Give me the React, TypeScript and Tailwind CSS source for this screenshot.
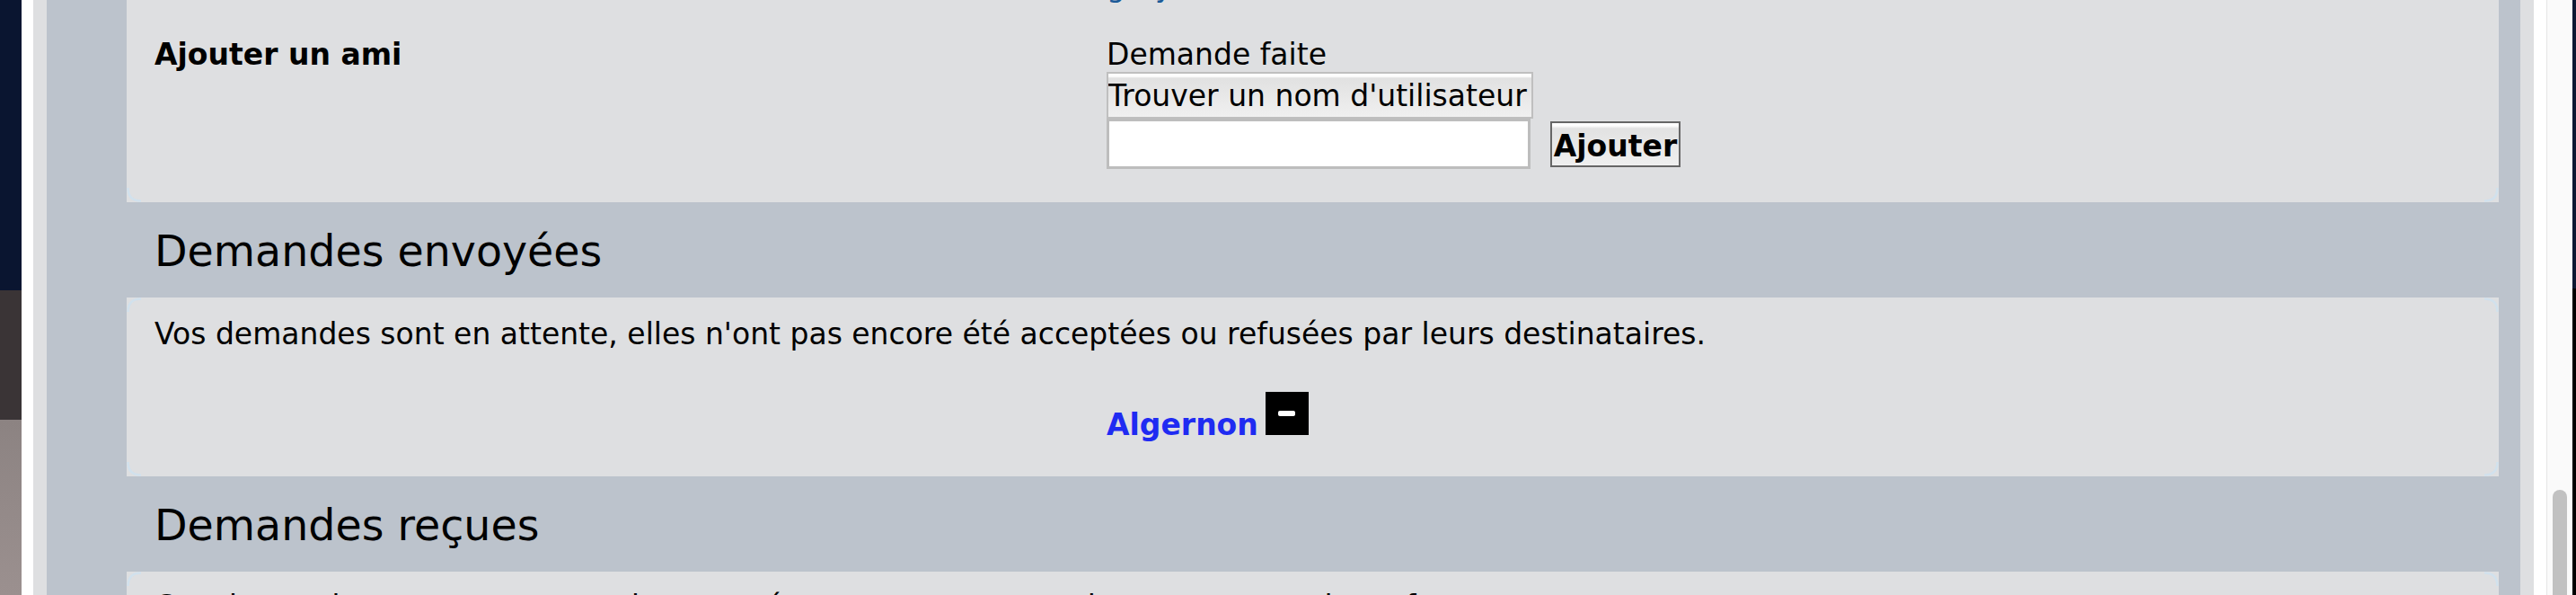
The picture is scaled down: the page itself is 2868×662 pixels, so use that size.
import React from 'react';

type CornerPos = 'tl' | 'tr' | 'bl' | 'br';

function Corner({ pos }: { pos: CornerPos }) {
  const place = {
    tl: 'top-0 left-0',
    tr: 'top-0 right-0 -scale-x-100',
    bl: 'bottom-0 left-0 -scale-y-100',
    br: 'bottom-0 right-0 -scale-x-100 -scale-y-100',
  }[pos];
  return (
    <svg className={`absolute w-[16px] h-[16px] ${place}`} viewBox="0 0 16 16">
      <path d="M1.5 16 Q1.5 1.5 16 1.5" fill="none" stroke="#cfe1ee" strokeWidth="2.5" opacity="0.9" />
    </svg>
  );
}

function Card({ className, children }: { className?: string; children: React.ReactNode }) {
  return (
    <div className={`relative bg-[#dedfe1] pl-[31px] ${className ?? ''}`}>
      <Corner pos="tl" />
      <Corner pos="tr" />
      <Corner pos="bl" />
      <Corner pos="br" />
      {children}
    </div>
  );
}

function Heading({ children }: { children: React.ReactNode }) {
  return (
    <h2 className="pl-[31px] pt-[27px] pb-[24px] text-[47.5px] leading-[normal] font-normal text-black">
      {children}
    </h2>
  );
}

export default function App() {
  return (
    <div className="flex h-[662px] w-[2868px] overflow-hidden font-['DejaVu_Sans',Verdana,sans-serif] text-[33px] leading-[normal] text-black">
      {/* desktop peeking out on the left */}
      <div className="flex w-[24px] shrink-0 flex-col">
        <div className="h-[323px] bg-[#0a1530]" />
        <div className="h-[144px] bg-[#3a3436]" />
        <div className="flex-1 bg-gradient-to-b from-[#8c8382] to-[#9b908f]" />
      </div>

      {/* page */}
      <div className="w-[2811px] shrink-0 bg-white pl-[13px] pr-[14px]">
        <div className="h-full bg-[#dedfe1] px-[15px]">
          <div className="flex h-full flex-col bg-[#bcc3cc] pl-[89px] pr-[24px]">
            <Card className="-mt-[57px] pt-[22px] pb-[37px]">
              <div className="grid grid-cols-[1060px_1fr]">
                <div />
                <div>
                  <a className="text-[#1b5a98]">grey</a>
                </div>
              </div>
              <div className="mt-[37px] grid grid-cols-[1060px_1fr]">
                <div className="font-bold">Ajouter un ami</div>
                <div>
                  <div>Demande faite</div>
                  <div className="flex h-[52px] w-[475px] items-center overflow-hidden whitespace-nowrap border-2 border-[#bfbfbf] bg-[linear-gradient(#fdfdfd_0,#fdfdfd_3px,#e1e1e1_5px,#f0f0f0_100%)] leading-none">
                    Trouver un nom d'utilisateur
                  </div>
                  <div className="flex items-end gap-[22px]">
                    <div className="h-[56px] w-[472px] border-[3px] border-[#bdbdbd] bg-white" />
                    <button className="mb-[2px] flex h-[51px] w-[145px] items-center justify-center whitespace-nowrap border-2 border-[#666666] bg-[linear-gradient(#fdfdfd_0,#fdfdfd_3px,#e2e2e2_6px,#efefef_100%)] pt-[4px] font-bold leading-none text-black">
                      Ajouter
                    </button>
                  </div>
                </div>
              </div>
            </Card>

            <Heading>Demandes envoyées</Heading>

            <Card className="pt-[21px] pb-[38px]">
              <p>
                Vos demandes sont en attente, elles n'ont pas encore été acceptées ou refusées par leurs destinataires.
              </p>
              <div className="mt-[45px] grid grid-cols-[1060px_1fr]">
                <div />
                <div>
                  <a className="font-bold text-[#1f2bf2]">Algernon</a>
                  <span className="relative ml-[8px] inline-block h-[48px] w-[48px] bg-black align-baseline">
                    <span className="absolute left-[14px] top-[21px] h-[6px] w-[19px] rounded-[2px] bg-white" />
                  </span>
                </div>
              </div>
            </Card>

            <Heading>Demandes reçues</Heading>

            <Card className="flex-1 pt-[19px]">
              <p>
                Ces demandes sont en attente de votre réponse, vous pouvez les accepter ou les refuser.
              </p>
            </Card>
          </div>
        </div>
      </div>

      {/* scrollbar */}
      <div className="flex w-[29px] shrink-0 justify-center border-l border-[#e6e6e6] bg-[#fafafa]">
        <div className="mt-[545px] h-[140px] w-[16px] rounded-full bg-[#c1c1c1]" />
      </div>

      {/* right edge of the desktop */}
      <div className="flex w-[4px] shrink-0 flex-col">
        <div className="h-[321px] bg-[#0d1832]" />
        <div className="flex-1 bg-black" />
      </div>
    </div>
  );
}
